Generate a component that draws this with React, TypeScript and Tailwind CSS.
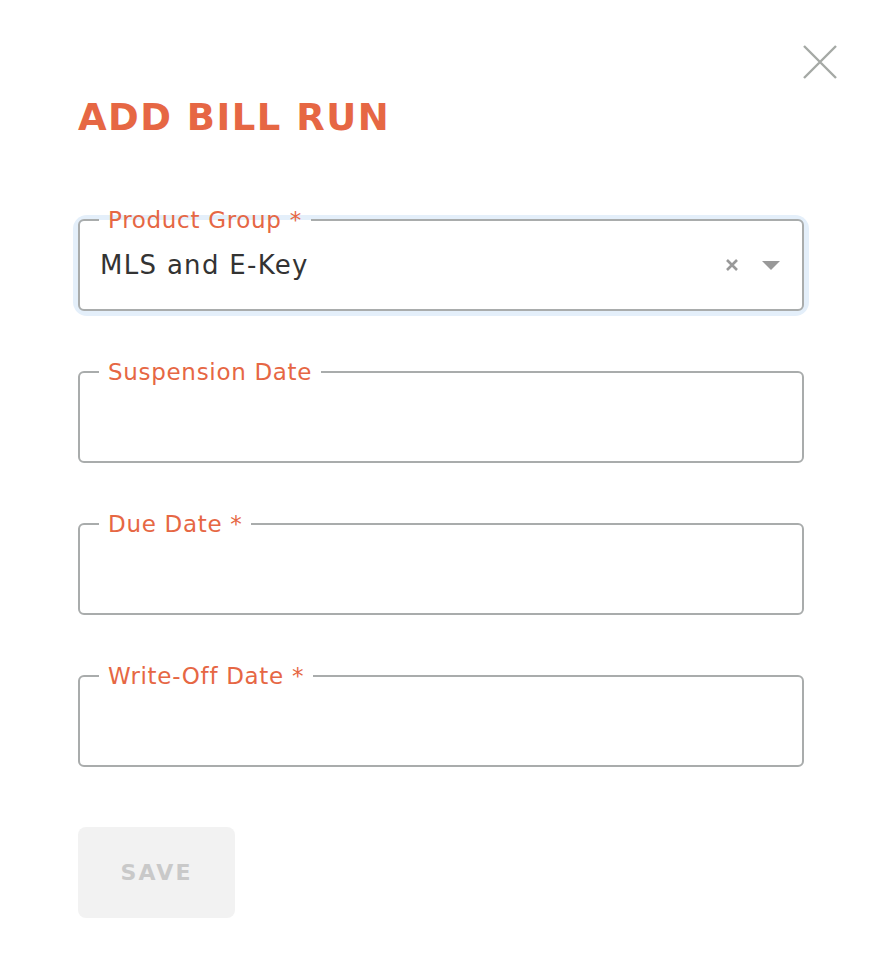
import React from 'react';

const font = { fontFamily: '"DejaVu Sans", "Open Sans", sans-serif' };

function Field({ label, value, focused }: { label: string; value?: string; focused?: boolean }) {
  return (
    <div className={`rounded-[9px] ${focused ? 'shadow-[0_0_0_5px_#e4effa]' : ''}`}>
      <fieldset className="-mt-[14px] h-[105px] rounded-[6px] border-2 border-[#a9acac] px-[20px] pt-0">
        <legend className="ml-[-1px] px-[9px] text-[23px] leading-[28px] tracking-[0.03em] text-[#e66744]">{label}</legend>
        <div className="flex h-[62px] items-center">
          <span className="flex-1 text-[26px] tracking-[0.05em] text-[#333333]">{value}</span>
          {focused && (
            <div className="flex items-center gap-[22px] pr-[1px]">
              <svg width="14" height="14" viewBox="0 0 14 14">
                <path d="M2 2 L12 12 M12 2 L2 12" stroke="#999999" strokeWidth="2.6" />
              </svg>
              <svg width="20" height="10" viewBox="0 0 20 10">
                <path d="M1 1 H19 L10 10 Z" fill="#999999" />
              </svg>
            </div>
          )}
        </div>
      </fieldset>
    </div>
  );
}

export default function App() {
  return (
    <div className="relative min-h-[968px] w-[876px] bg-white" style={font}>
      <button className="absolute right-[38px] top-[44px]">
        <svg width="36" height="36" viewBox="0 0 36 36">
          <path d="M2 2 L34 34 M34 2 L2 34" stroke="#a5a9a5" strokeWidth="2.4" />
        </svg>
      </button>
      <div className="flex flex-col pl-[78px] pr-[72px] pt-[96px]">
        <h1 className="text-[37px] font-bold leading-[44px] tracking-[0.04em] text-[#e66744]">ADD BILL RUN</h1>
        <div className="mt-[80px] flex flex-col gap-[61px]">
          <Field label="Product Group *" value="MLS and E-Key" focused />
          <Field label="Suspension Date" />
          <Field label="Due Date *" />
          <Field label="Write-Off Date *" />
        </div>
        <button
          disabled
          className="mt-[60px] flex h-[91px] w-[157px] items-center justify-center rounded-[8px] bg-[#f2f2f2] text-[22px] font-bold tracking-[0.1em] text-[#c9c9c9]"
        >
          SAVE
        </button>
      </div>
    </div>
  );
}
